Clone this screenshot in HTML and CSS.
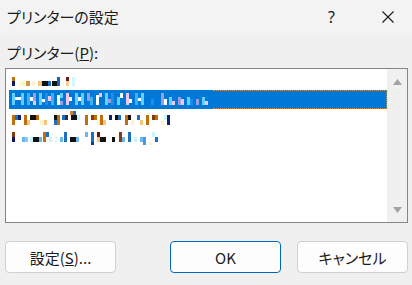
FILE: index.html
```html
<!DOCTYPE html>
<html lang="ja">
<head>
    <meta charset="UTF-8">
    <title>プリンターの設定</title>
    <link rel="stylesheet" href="styles.css">
</head>
<body>
    <div class="dialog">
        <div class="titlebar">
            <span class="title">プリンターの設定</span>
            <span class="help">?</span>
            <span class="close">
                <svg width="12" height="12" viewBox="0 0 12 12">
                    <path d="M0.5 0.5 L11.5 11.5 M11.5 0.5 L0.5 11.5" stroke="#1a1a1a" stroke-width="1.1" fill="none"/>
                </svg>
            </span>
        </div>

        <div class="content">
            <div class="label">プリンター(<u>P</u>):</div>

            <div class="listbox">
                <div class="list">
                    <!-- printer names are blurred in the original, drawn as mosaic -->
                    <div class="row">
                        <svg class="mosaic" width="70" height="12" viewBox="0 0 70 12">
                            <rect x="1" y="2" width="3" height="4" fill="#c0700a"/>
                            <rect x="1" y="6" width="3" height="5" fill="#101a60"/>
                            <rect x="9" y="6" width="3" height="5" fill="#fff6d2"/>
                            <rect x="12" y="6" width="2" height="5" fill="#fff0b8"/>
                            <rect x="15" y="6" width="4" height="5" fill="#d39442"/>
                            <rect x="21" y="6" width="3" height="5" fill="#fff0d2"/>
                            <rect x="27" y="6" width="4" height="5" fill="#f7c47e"/>
                            <rect x="31" y="6" width="6" height="5" fill="#111111"/>
                            <rect x="37" y="6" width="3" height="5" fill="#1f6fc0"/>
                            <rect x="41" y="6" width="5" height="5" fill="#111111"/>
                            <rect x="46" y="2" width="3" height="9" fill="#1a63b3"/>
                            <rect x="55" y="2" width="3" height="4" fill="#6e1c1c"/>
                            <rect x="55" y="6" width="3" height="5" fill="#f7cf95"/>
                            <rect x="61" y="2" width="3" height="9" fill="#d2f8ff"/>
                        </svg>
                    </div>
                    <div class="row selected">
                        <svg class="mosaic sel-mosaic" width="204" height="19" viewBox="0 0 204 19">
                            <rect x="3" y="3" width="3" height="12" fill="#5fd0ff"/>
                            <rect x="6" y="7" width="6" height="3" fill="#ffffff"/>
                            <rect x="12" y="3" width="3" height="12" fill="#5fd0ff"/>
                            <rect x="18" y="3" width="3" height="12" fill="#3fb0f0"/>
                            <rect x="21" y="7" width="3" height="4" fill="#ffffff"/>
                            <rect x="24" y="3" width="3" height="8" fill="#9c9ee0"/>
                            <rect x="24" y="11" width="3" height="4" fill="#f3c6e6"/>
                            <rect x="30" y="3" width="3" height="12" fill="#5fd0ff"/>
                            <rect x="33" y="9" width="3" height="3" fill="#ffffff"/>
                            <rect x="36" y="3" width="3" height="12" fill="#1a8ee8"/>
                            <rect x="39" y="6" width="3" height="5" fill="#f3c6e6"/>
                            <rect x="42" y="3" width="3" height="12" fill="#3fb0f0"/>
                            <rect x="48" y="5" width="3" height="10" fill="#ffffff"/>
                            <rect x="51" y="3" width="3" height="5" fill="#5fd0ff"/>
                            <rect x="51" y="11" width="3" height="4" fill="#9c9ee0"/>
                            <rect x="57" y="3" width="3" height="12" fill="#f3c6e6"/>
                            <rect x="60" y="7" width="3" height="4" fill="#ffffff"/>
                            <rect x="66" y="3" width="3" height="12" fill="#5fd0ff"/>
                            <rect x="69" y="7" width="3" height="4" fill="#ffffff"/>
                            <rect x="72" y="3" width="3" height="12" fill="#5fd0ff"/>
                            <rect x="78" y="3" width="3" height="8" fill="#9c9ee0"/>
                            <rect x="81" y="7" width="3" height="8" fill="#3fb0f0"/>
                            <rect x="87" y="5" width="3" height="10" fill="#ffffff"/>
                            <rect x="90" y="3" width="3" height="4" fill="#f3c6e6"/>
                            <rect x="96" y="3" width="3" height="12" fill="#5fd0ff"/>
                            <rect x="99" y="9" width="3" height="4" fill="#9c9ee0"/>
                            <rect x="102" y="3" width="3" height="12" fill="#1a8ee8"/>
                            <rect x="108" y="7" width="3" height="8" fill="#5fd0ff"/>
                            <rect x="111" y="3" width="3" height="5" fill="#ffffff"/>
                            <rect x="117" y="3" width="3" height="12" fill="#f3c6e6"/>
                            <rect x="120" y="9" width="3" height="4" fill="#ffffff"/>
                            <rect x="126" y="3" width="3" height="12" fill="#3fb0f0"/>
                            <rect x="129" y="8" width="3" height="3" fill="#ffffff"/>
                            <rect x="132" y="3" width="3" height="12" fill="#5fd0ff"/>
                            <rect x="142" y="9" width="3" height="6" fill="#1a8ee8"/>
                            <rect x="152" y="3" width="3" height="12" fill="#9c9ee0"/>
                            <rect x="155" y="9" width="3" height="6" fill="#ffffff"/>
                            <rect x="160" y="7" width="3" height="8" fill="#5fd0ff"/>
                            <rect x="163" y="11" width="3" height="4" fill="#f3c6e6"/>
                            <rect x="169" y="7" width="3" height="8" fill="#9c9ee0"/>
                            <rect x="172" y="9" width="3" height="6" fill="#f3c6e6"/>
                            <rect x="178" y="7" width="3" height="8" fill="#5fd0ff"/>
                            <rect x="181" y="9" width="3" height="6" fill="#1a8ee8"/>
                            <rect x="187" y="9" width="3" height="6" fill="#9c9ee0"/>
                            <rect x="193" y="7" width="3" height="8" fill="#5fd0ff"/>
                            <rect x="196" y="11" width="3" height="4" fill="#f3c6e6"/>
                        </svg>
                        <span class="focus-rest"></span>
                    </div>
                    <div class="row">
                        <svg class="mosaic" width="165" height="16" viewBox="0 0 165 16">
                            <rect x="1" y="4" width="3" height="10" fill="#c0700a"/>
                            <rect x="4" y="4" width="3" height="5" fill="#1f6fc0"/>
                            <rect x="7" y="4" width="3" height="5" fill="#132070"/>
                            <rect x="13" y="4" width="3" height="10" fill="#c0700a"/>
                            <rect x="16" y="9" width="3" height="5" fill="#f7c47e"/>
                            <rect x="19" y="4" width="6" height="5" fill="#111111"/>
                            <rect x="25" y="4" width="3" height="5" fill="#b8650c"/>
                            <rect x="29" y="9" width="4" height="5" fill="#fff3c9"/>
                            <rect x="33" y="9" width="3" height="5" fill="#f7c47e"/>
                            <rect x="43" y="4" width="3" height="5" fill="#111111"/>
                            <rect x="43" y="9" width="3" height="5" fill="#1f6fc0"/>
                            <rect x="46" y="4" width="3" height="10" fill="#c0700a"/>
                            <rect x="51" y="4" width="3" height="5" fill="#1f6fc0"/>
                            <rect x="54" y="4" width="3" height="5" fill="#333333"/>
                            <rect x="59" y="0" width="3" height="4" fill="#d3822e"/>
                            <rect x="62" y="0" width="3" height="4" fill="#1f6fc0"/>
                            <rect x="60" y="4" width="6" height="5" fill="#111111"/>
                            <rect x="66" y="4" width="3" height="5" fill="#c8f6ff"/>
                            <rect x="74" y="4" width="3" height="10" fill="#c0700a"/>
                            <rect x="80" y="4" width="3" height="5" fill="#8a3a0a"/>
                            <rect x="83" y="4" width="3" height="5" fill="#c0700a"/>
                            <rect x="86" y="9" width="3" height="5" fill="#fff3c9"/>
                            <rect x="89" y="4" width="3" height="10" fill="#c0700a"/>
                            <rect x="92" y="9" width="3" height="5" fill="#f7c47e"/>
                            <rect x="98" y="4" width="3" height="5" fill="#132070"/>
                            <rect x="104" y="4" width="3" height="5" fill="#111111"/>
                            <rect x="107" y="4" width="3" height="5" fill="#1f6fc0"/>
                            <rect x="114" y="4" width="3" height="10" fill="#c0700a"/>
                            <rect x="117" y="4" width="3" height="5" fill="#111111"/>
                            <rect x="120" y="9" width="3" height="5" fill="#fff3c9"/>
                            <rect x="126" y="4" width="3" height="5" fill="#1f6fc0"/>
                            <rect x="129" y="9" width="3" height="5" fill="#f7c47e"/>
                            <rect x="135" y="4" width="3" height="10" fill="#c0700a"/>
                            <rect x="141" y="4" width="3" height="5" fill="#8a3a0a"/>
                            <rect x="144" y="4" width="3" height="5" fill="#c0700a"/>
                            <rect x="150" y="9" width="3" height="5" fill="#fff3c9"/>
                            <rect x="153" y="4" width="3" height="5" fill="#c8f6ff"/>
                            <rect x="156" y="4" width="3" height="10" fill="#132070"/>
                        </svg>
                    </div>
                    <div class="row">
                        <svg class="mosaic" width="150" height="16" viewBox="0 0 150 16">
                            <rect x="1" y="2" width="3" height="5" fill="#8a3a0a"/>
                            <rect x="1" y="7" width="3" height="5" fill="#0d1660"/>
                            <rect x="11" y="7" width="3" height="5" fill="#6ab8f0"/>
                            <rect x="14" y="7" width="3" height="5" fill="#8ccaf5"/>
                            <rect x="19" y="7" width="3" height="5" fill="#c8f6ff"/>
                            <rect x="22" y="7" width="6" height="5" fill="#111111"/>
                            <rect x="28" y="7" width="3" height="5" fill="#6ab8f0"/>
                            <rect x="32" y="2" width="3" height="10" fill="#c0700a"/>
                            <rect x="35" y="2" width="3" height="5" fill="#1f6fc0"/>
                            <rect x="38" y="7" width="3" height="5" fill="#c8f6ff"/>
                            <rect x="44" y="7" width="3" height="5" fill="#e4fbff"/>
                            <rect x="49" y="7" width="3" height="5" fill="#6ab8f0"/>
                            <rect x="53" y="2" width="3" height="10" fill="#1f6fc0"/>
                            <rect x="59" y="7" width="6" height="5" fill="#111111"/>
                            <rect x="65" y="7" width="3" height="5" fill="#6ab8f0"/>
                            <rect x="74" y="2" width="3" height="5" fill="#6ab8f0"/>
                            <rect x="80" y="2" width="3" height="10" fill="#1f6fc0"/>
                            <rect x="80" y="12" width="3" height="3" fill="#0d3a90"/>
                            <rect x="86" y="2" width="3" height="5" fill="#6e1010"/>
                            <rect x="86" y="7" width="3" height="5" fill="#f7c47e"/>
                            <rect x="89" y="7" width="6" height="5" fill="#111111"/>
                            <rect x="101" y="7" width="3" height="5" fill="#111111"/>
                            <rect x="108" y="2" width="3" height="10" fill="#8a3a0a"/>
                            <rect x="111" y="7" width="3" height="5" fill="#6ab8f0"/>
                            <rect x="117" y="2" width="3" height="10" fill="#1f6fc0"/>
                            <rect x="123" y="7" width="3" height="5" fill="#c8f6ff"/>
                            <rect x="129" y="7" width="3" height="5" fill="#6ab8f0"/>
                            <rect x="132" y="7" width="3" height="8" fill="#4a98e0"/>
                            <rect x="138" y="12" width="3" height="3" fill="#fff8d8"/>
                            <rect x="141" y="2" width="3" height="5" fill="#c8f6ff"/>
                            <rect x="144" y="7" width="3" height="5" fill="#1f6fc0"/>
                        </svg>
                    </div>
                </div>
                <div class="scrollbar">
                    <svg width="9" height="6" viewBox="0 0 9 6"><path d="M4.5 0 L9 6 L0 6 Z" fill="#a3a3a3"/></svg>
                    <svg width="9" height="6" viewBox="0 0 9 6"><path d="M0 0 L9 0 L4.5 6 Z" fill="#a3a3a3"/></svg>
                </div>
            </div>

            <div class="buttons">
                <button class="btn">設定(<u>S</u>)...</button>
                <button class="btn default">OK</button>
                <button class="btn">キャンセル</button>
            </div>
        </div>
    </div>
</body>
</html>
```

FILE: styles.css
```css
body {
    margin: 0;
    background-color: #f0f0f0;
    font-family: "Noto Sans CJK JP", "Noto Sans", sans-serif;
    font-feature-settings: "palt";
    color: #1a1a1a;
    overflow: hidden;
}

.dialog {
    width: 412px;
    height: 285px;
    display: flex;
    flex-direction: column;
}

.titlebar {
    height: 33px;
    background-color: #f3f3f3;
    display: flex;
    align-items: center;
    padding-left: 7px;
    font-size: 15px;
}

.title {
    flex: 1;
}

.help {
    width: 20px;
    margin-right: 34px;
    font-family: "Noto Sans", sans-serif;
    font-size: 16px;
}

.close {
    width: 30px;
    display: flex;
    align-items: center;
}

.content {
    padding: 10px 4px 0 5px;
}

.label {
    font-size: 15px;
    line-height: 20px;
    padding-left: 2px;
    height: 25px;
}

.listbox {
    height: 153px;
    border: 1px solid #82868c;
    background-color: #ffffff;
    display: flex;
}

.list {
    flex: 1;
    padding: 2px 0 0 3px;
}

.row {
    height: 19px;
    display: flex;
    align-items: center;
}

.mosaic {
    display: block;
    margin-left: 2px;
}

.selected {
    background-color: #0078d7;
    align-items: stretch;
}

.sel-mosaic {
    margin-left: 0;
}

.focus-rest {
    flex: 1;
    border: 1px dotted #e2892c;
    border-left: none;
}

.scrollbar {
    width: 20px;
    background-color: #f0f0f0;
    display: flex;
    flex-direction: column;
    justify-content: space-between;
    align-items: center;
    padding: 10px 0 9px;
}

.scrollbar svg {
    display: block;
}

.buttons {
    display: flex;
    gap: 16px;
    margin-top: 18px;
}

.btn {
    width: 111px;
    height: 32px;
    background-color: #fdfdfd;
    border: 1px solid #d0d0d0;
    border-radius: 4px;
    font-family: "Noto Sans CJK JP", "Noto Sans", sans-serif;
    font-feature-settings: "palt";
    font-size: 15px;
    color: #1a1a1a;
    padding: 0;
}

.default {
    margin-left: auto;
    border-color: #0067c0;
}
```
